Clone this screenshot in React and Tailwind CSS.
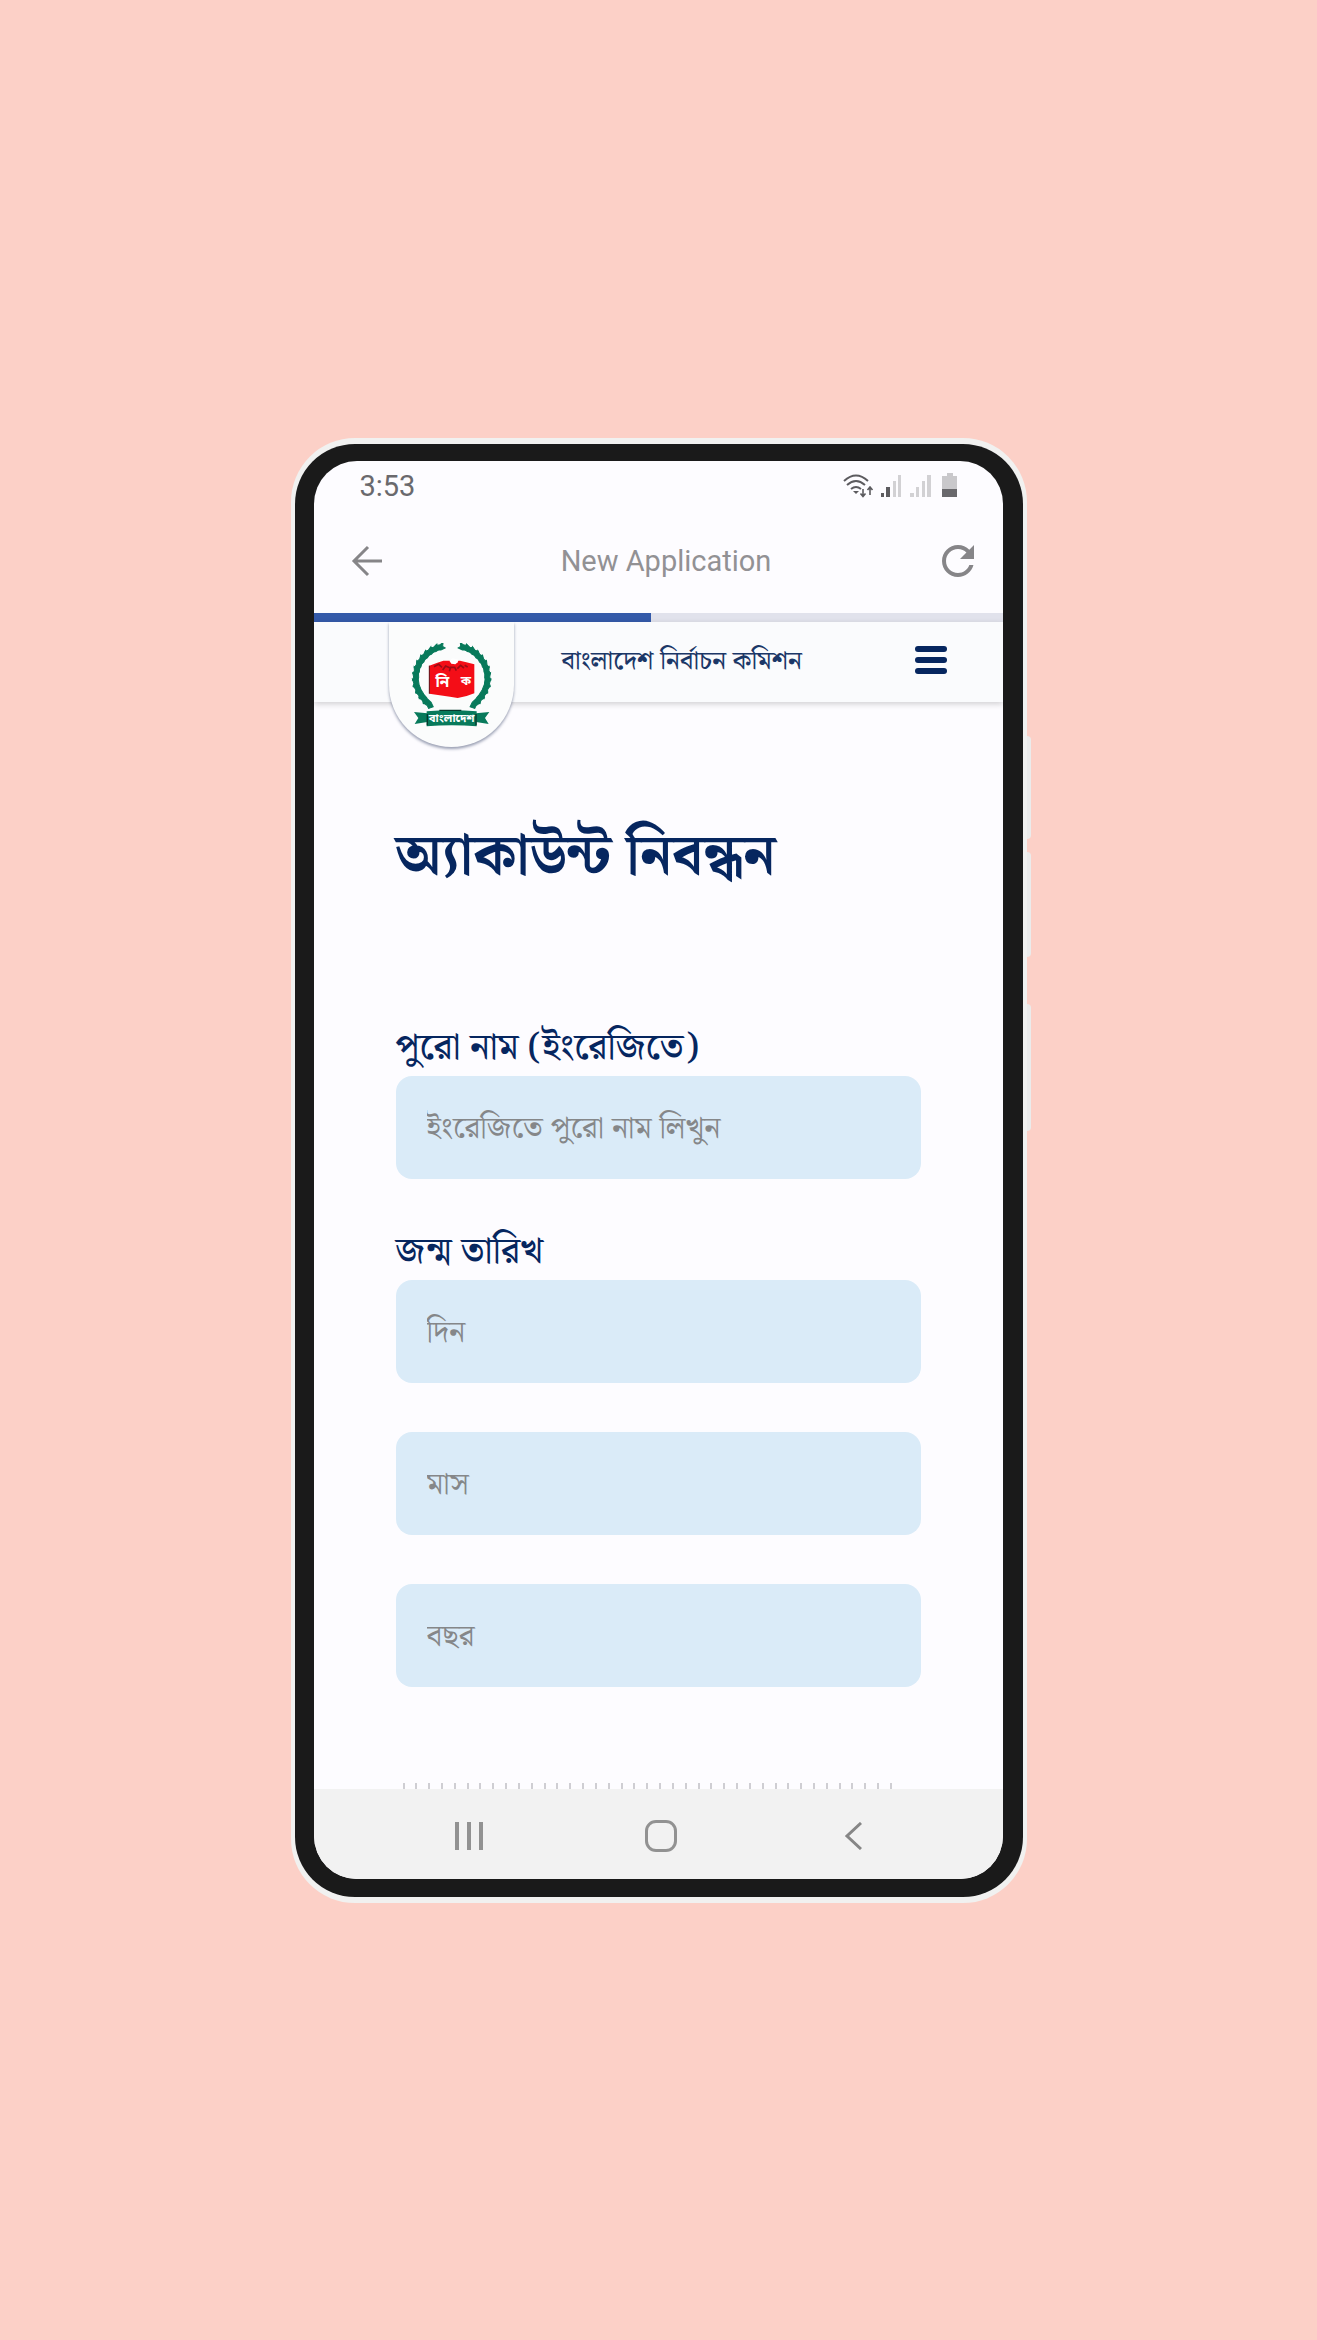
import React from "react";

const bangla = "font-['Noto_Serif_Bengali','Noto_Sans_Bengali','Noto_Sans',sans-serif]";

function StatusIcons() {
  return (
    <svg viewBox="0 0 116 26" className="h-[26px] w-[116px]" aria-hidden="true">
      <g fill="none" stroke="#5c5b5f" strokeWidth="2">
        <path d="M1 8Q13 -3 25 8" />
        <path d="M4 12Q13 4 22 12" />
        <path d="M8 16Q13 12 18 16" />
      </g>
      <path d="M10 18h6l-3 3z" fill="#5c5b5f" />
      <path
        d="M20 16v7M17.500 20.500L20 23.500L22.500 20.500M27 22v-8M24.500 17L27 14L29.500 17"
        fill="none"
        stroke="#5c5b5f"
        strokeWidth="1.600"
      />
      <g fill="#5c5b5f">
        <path d="M38 20h3v4h-3zM43 14h4v10h-4z" />
      </g>
      <g fill="#d2d1d4">
        <path d="M50 8h3v16h-3zM55 2h3v22h-3zM67 20h4v4h-4zM73 14h3v10h-3zM79 8h3v16h-3zM84 2h4v22h-4z" />
        <path d="M104 0h6v3h4v13H99V3h5z" fill="#c9c8cb" />
      </g>
      <path d="M99 16h15v8H99z" fill="#69686c" />
    </svg>
  );
}

const leaves = [
  [208, 78, -25],
  [192, 84, -35],
  [177, 93, -45],
  [164, 105, -55],
  [153, 119, -65],
  [144, 135, -75],
  [139, 152, -85],
  [137, 170, -92],
  [138, 188, -100],
  [144, 206, -112],
  [153, 222, -122],
  [164, 236, -130],
  [178, 250, -138],
];

function Wreath() {
  return (
    <g fill="#087a5b" stroke="#087a5b" strokeWidth="3">
      {leaves.map(([x, y, a]) => (
        <g key={y} transform={`translate(${x} ${y}) rotate(${a})`}>
          <path d="M-13 3L-6 -10L3 -6L16 -8L10 2L15 9L1 9Z" />
        </g>
      ))}
    </g>
  );
}

function Emblem() {
  return (
    <svg viewBox="120 65 249 255" className="h-[85px] w-[83px]" role="img" aria-label="Election Commission emblem">
      <Wreath />
      <g transform="translate(490 0) scale(-1 1)">
        <Wreath />
      </g>
      <path d="M178 133L200 125L220 118H270L289 123L313 129V216L290 224L263 230L240 226L178 217Z" fill="#f40d17" />
      <path d="M178 133V217" stroke="#5c0a10" strokeWidth="3" />
      <path
        d="M192 136l14 -7 10 9M218 146l9 -12 12 5M238 150l4 -12h12l5 10M262 142l10 -10 10 8M284 132l9 5"
        fill="none"
        stroke="#9b0c15"
        strokeWidth="5"
      />
      <path d="M238 118l10 -7 18 4 -3 8 -7 6 -12 -2z" fill="#fff" />
      <g fill="#fff" fontFamily="'Noto Sans Bengali','Noto Sans',sans-serif" fontWeight="700" textAnchor="middle">
        <text x="217" y="196" fontSize="46">নি</text>
        <text x="288" y="190" fontSize="38">ক</text>
      </g>
      <path d="M132 272L172 276V302L134 308L145 290ZM358 272L318 276V302L356 308L345 290Z" fill="#087a5b" />
      <path d="M170 270Q245 264 320 270V315Q245 309 170 315Z" fill="#087a5b" />
      <path d="M208 267H274M172 278V312M318 278V312" stroke="#07382c" strokeWidth="4" />
      <text
        x="245"
        y="301"
        fontSize="34"
        fontWeight="700"
        fill="#fff"
        textAnchor="middle"
        fontFamily="'Noto Sans Bengali','Noto Sans',sans-serif"
      >
        বাংলাদেশ
      </text>
    </svg>
  );
}

function TextBox({ id, name, placeholder }) {
  return (
    <input
      id={id}
      type="text"
      aria-label={name}
      placeholder={placeholder}
      className="h-[103px] w-full rounded-2xl bg-[#daebf8] px-[31px] pt-1 text-[31px] text-[#666] outline-none placeholder:text-[#858789]"
    />
  );
}

function Label({ htmlFor, children }) {
  return (
    <label htmlFor={htmlFor} className="text-[37px] leading-[54px] font-medium text-[#06265f]">
      {children}
    </label>
  );
}

export default function App() {
  return (
    <main className="flex min-h-screen items-center justify-center bg-[#fcd0c7]">
      <div className="relative w-full max-w-[736px] rounded-[64px] bg-[#f1f1f0] py-1.5 pr-1 pl-1">
        <span className="absolute top-[298px] -right-1 h-[103px] w-1 rounded-r bg-[#ebebeb]" />
        <span className="absolute top-[414px] -right-1 h-[105px] w-1 rounded-r bg-[#ebebeb]" />
        <span className="absolute top-[566px] -right-1 h-[127px] w-1 rounded-r bg-[#ebebeb]" />

        <div className="rounded-[60px] bg-[#1a1a1a] pt-[17px] pr-5 pb-[18px] pl-[19px]">
          <div className={`overflow-hidden rounded-[43px] bg-[#fdfcff] ${bangla}`}>
            <div className="flex h-[50px] items-center justify-between pr-11 pl-[46px]">
              <time className="font-[Roboto,sans-serif] text-[29px] leading-[50px] text-[#6a696d]">3:53</time>
              <StatusIcons />
            </div>

            <header className="flex h-[102px] items-center justify-between pr-7 pb-0.5 pl-9">
              <button type="button" aria-label="Back" className="flex w-10 items-center">
                <svg viewBox="0 0 34 32" className="h-8 w-[34px]" fill="none" stroke="#868588" strokeWidth="3">
                  <path d="M18 2L4 16L18 30M4 16H32" />
                </svg>
              </button>
              <h2 className="font-[Roboto,sans-serif] text-[29px] leading-[36px] text-[#929194]">New Application</h2>
              <button type="button" aria-label="Reload" className="flex w-8 items-center justify-center">
                <svg viewBox="4 4 16 16" className="h-8 w-8" fill="#868588">
                  <path d="M17.650 6.350C16.200 4.900 14.210 4 12 4c-4.420 0-7.990 3.580-7.990 8s3.570 8 7.990 8c3.730 0 6.840-2.550 7.730-6h-2.080c-.82 2.330-3.040 4-5.650 4-3.310 0-6-2.690-6-6s2.690-6 6-6c1.660 0 3.140.69 4.220 1.780L13 11h7V4l-2.350 2.350z" />
                </svg>
              </button>
            </header>

            <div role="progressbar" aria-label="Loading" aria-valuenow={49} className="h-[9px] bg-[#e1e2ec]">
              <div className="h-full w-[49%] bg-[#345aa9]" />
            </div>

            <div className="flex h-20 items-start bg-[#fafbfd] pr-14 pl-[75px] shadow-[0_2px_6px_rgba(0,0,0,0.18)]">
              <a
                href="#home"
                aria-label="Home"
                className="flex h-[125px] w-[125px] shrink-0 justify-center rounded-b-full bg-[#fbfcfc] pt-[21px] shadow-[0_2px_3px_rgba(30,45,85,0.45)] [clip-path:inset(0_-6px_-8px_-6px)]"
              >
                <Emblem />
              </a>
              <p className="ml-12 text-[26px] leading-[80px] font-medium text-[#1b3767]">বাংলাদেশ নির্বাচন কমিশন</p>
              <button type="button" aria-label="Menu" className="mt-6 ml-auto flex w-8 flex-col gap-[5px]">
                <span className="h-1.5 rounded-sm bg-[#06265f]" />
                <span className="h-1.5 rounded-sm bg-[#06265f]" />
                <span className="h-1.5 rounded-sm bg-[#06265f]" />
              </button>
            </div>

            <div className="px-[82px] pt-[116px]">
              <h1 className="text-[57px] leading-[80px] font-bold text-[#06265f]">অ্যাকাউন্ট নিবন্ধন</h1>
              <form className="mt-[124px] flex flex-col">
                <Label htmlFor="full-name">পুরো নাম (ইংরেজিতে)</Label>
                <TextBox id="full-name" placeholder="ইংরেজিতে পুরো নাম লিখুন" />
                <div className="mt-[47px] flex flex-col">
                  <Label htmlFor="day">জন্ম তারিখ</Label>
                  <div className="flex flex-col gap-[49px]">
                    <TextBox id="day" placeholder="দিন" />
                    <TextBox id="month" name="মাস" placeholder="মাস" />
                    <TextBox id="year" name="বছর" placeholder="বছর" />
                  </div>
                </div>
              </form>
              <div className="mt-24 mr-7 ml-[7px] flex h-[6px] justify-between" aria-hidden="true">
                {Array.from({ length: 39 }, (_, i) => (
                  <span key={i} className="w-0.5 bg-[#cfced3]" />
                ))}
              </div>
            </div>

            <nav className="grid h-[90px] grid-cols-3 items-center bg-[#f2f2f2] pt-1 pr-[54px] pl-[60px]">
              <button type="button" aria-label="Recent apps" className="flex justify-center gap-2">
                <span className="h-7 w-1 bg-[#929292]" />
                <span className="h-7 w-1 bg-[#929292]" />
                <span className="h-7 w-1 bg-[#929292]" />
              </button>
              <button type="button" aria-label="Home screen" className="flex justify-center">
                <span className="h-8 w-8 rounded-[11px] border-[3px] border-[#929292]" />
              </button>
              <button type="button" aria-label="Go back" className="flex justify-center">
                <svg viewBox="0 0 18 28" className="h-7 w-[18px]" fill="none" stroke="#868686" strokeWidth="3">
                  <path d="M17 1L3 14L17 27" />
                </svg>
              </button>
            </nav>
          </div>
        </div>
      </div>
    </main>
  );
}
